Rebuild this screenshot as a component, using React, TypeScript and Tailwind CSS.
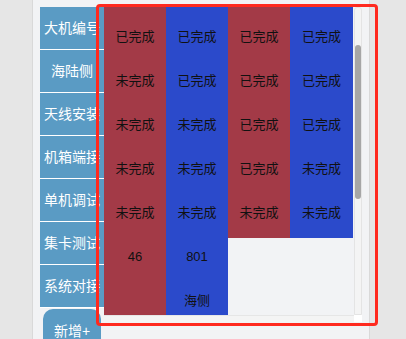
const labels = ["大机编号", "海陆侧", "天线安装", "机箱端接", "单机调试", "集卡测试", "系统对接"];

const columns: { tone: "red" | "blue"; cells: string[] }[] = [
  { tone: "red", cells: ["已完成", "未完成", "未完成", "未完成", "未完成", "46", ""] },
  { tone: "blue", cells: ["已完成", "已完成", "未完成", "未完成", "未完成", "801", "海侧"] },
  { tone: "red", cells: ["已完成", "已完成", "已完成", "已完成", "未完成"] },
  { tone: "blue", cells: ["已完成", "已完成", "已完成", "未完成", "未完成"] },
];

export default function App() {
  return (
    <div className="relative h-[339px] w-[406px] overflow-hidden bg-[#e6e6e6] font-['Liberation_Sans','Noto_Sans_CJK_SC',sans-serif]">
      <div className="ml-[32px] flex h-full w-[338px] items-start gap-0 border-l border-r border-[#d9d9d9] bg-[#f2f3f5] pl-[7px] pt-[7px]">
        {/* row labels */}
        <div className="flex w-[64px] shrink-0 flex-col">
          {labels.map((l) => (
            <div
              key={l}
              className="flex h-[43px] items-center justify-center overflow-hidden whitespace-nowrap border-b border-white bg-[#5a9bc4] text-[14px] text-white"
            >
              {l}
            </div>
          ))}
          <button className="mx-auto mt-[1px] flex h-[44px] w-[58px] items-center justify-center rounded-t-[10px] bg-[#5a9bc4] text-[14px] text-white">
            新增+
          </button>
        </div>

        {/* scroll area */}
        <div className="flex h-[315px] w-[258px] shrink-0 flex-col">
          <div className="flex h-[308px]">
            <div className="flex h-[308px] w-[250px] items-start overflow-hidden">
              {columns.map((c, i) => (
                <div
                  key={i}
                  className={`flex shrink-0 flex-col pb-[3px] pt-[8px] ${i === 3 ? "w-[63px]" : "w-[62px]"} ${
                    c.tone === "red" ? "bg-[#a33a47]" : "bg-[#2b4acb]"
                  }`}
                >
                  {c.cells.map((t, j) => (
                    <div key={j} className="flex h-[44px] items-center justify-center text-[13px] text-[#111]">
                      {t}
                    </div>
                  ))}
                </div>
              ))}
            </div>
            <div className="w-[8px] rounded-t-[3px] border border-[#e4e4e4] bg-[#f4f4f4]">
              <div className="mx-auto mt-[37px] h-[154px] w-[6px] rounded-full bg-[#a6a6a6]" />
            </div>
          </div>
          <div className="flex h-[7px]">
            <div className="w-[250px] border-t border-[#e6e6e6] bg-[#f4f4f4]" />
            <div className="w-[8px] bg-white" />
          </div>
        </div>
      </div>

      {/* annotation frame */}
      <div className="pointer-events-none absolute left-[96px] top-[4px] h-[322px] w-[282px] rounded-[4px] border-[3px] border-[#ff2a1f]" />
    </div>
  );
}
